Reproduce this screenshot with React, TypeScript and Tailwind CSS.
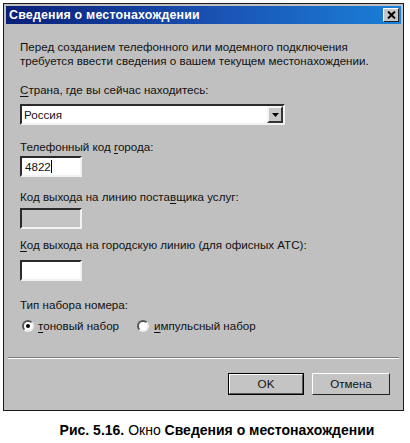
export default function App() {
  const sunken = 'border-2 border-t-[#2a2a2a] border-l-[#2a2a2a] border-b-[#f2f2f2] border-r-[#f2f2f2]';
  const raised = 'border-2 border-t-[#f4f4f4] border-l-[#f4f4f4] border-b-[#333] border-r-[#333]';
  const radio = 'border-2 border-t-[#555] border-l-[#555] border-b-[#eee] border-r-[#eee]';

  return (
    <div className="w-[410px] h-[443px] bg-white pt-[3px] pl-[3px] font-['Liberation_Sans',sans-serif] text-[11.6px] leading-[14px] text-[#111]">
      <div className="w-[401px] h-[408px] border border-[#1a1a1a] bg-[#c0c0c0] p-[2px] flex flex-col">
        {/* title bar */}
        <div className="h-[18px] flex items-center justify-between bg-gradient-to-r from-[#0a1f78] via-[#1a4fb0] to-[#1a80d8] pl-[3px] pr-[2px]">
          <span className="text-white font-bold text-[12.4px] tracking-[0.2px]">Сведения о местонахождении</span>
          <div className="w-[16px] h-[14px] bg-[#c8c8c8] flex items-center justify-center border border-t-white border-l-white border-b-[#222] border-r-[#222]">
            <svg width="9" height="8" viewBox="0 0 9 8">
              <path d="M1 0.5 L8 7.5 M8 0.5 L1 7.5" stroke="#000" strokeWidth="2" />
            </svg>
          </div>
        </div>

        <div className="pl-[14px] pr-[11px] flex flex-col">
          <p className="mt-[16px]">
            Перед созданием телефонного или модемного подключения
            <br />
            требуется ввести сведения о вашем текущем местонахождении.
          </p>

          <div className="mt-[15px]">
            <u className="underline-offset-2">С</u>трана, где вы сейчас находитесь:
          </div>
          <div className={`mt-[7px] w-[265px] h-[21px] bg-white flex items-center justify-between ${sunken}`}>
            <span className="pl-[2px]">Россия</span>
            <div className={`w-[16px] h-[17px] bg-[#c8c8c8] flex items-center justify-center ${raised}`}>
              <svg width="7" height="4" viewBox="0 0 7 4">
                <path d="M0 0 H7 L3.5 4 Z" fill="#000" />
              </svg>
            </div>
          </div>

          <div className="mt-[15px]">
            Телефонный код <u className="underline-offset-2">г</u>орода:
          </div>
          <div className={`mt-[2px] w-[62px] h-[21px] bg-white flex items-center pl-[3px] ${sunken}`}>
            <span>4822</span>
            <span className="w-px h-[13px] bg-black" />
          </div>

          <div className="mt-[13px]">
            Код выхода на линию поста<u className="underline-offset-2">в</u>щика услуг:
          </div>
          <div className={`mt-[4px] w-[62px] h-[21px] bg-[#c4c4c4] ${sunken}`} />

          <div className="mt-[9px]">
            <u className="underline-offset-2">К</u>од выхода на городскую линию (для офисных АТС):
          </div>
          <div className={`mt-[8px] w-[62px] h-[21px] bg-white ${sunken}`} />

          <div className="mt-[17px]">Тип набора номера:</div>
          <div className="mt-[7px] h-[14px] flex items-center">
            <span className={`ml-[2px] w-[12px] h-[12px] rounded-full bg-white flex items-center justify-center ${radio}`}>
              <span className="w-[4px] h-[4px] rounded-full bg-black" />
            </span>
            <span className="ml-[4px]">
              <u className="underline-offset-2">т</u>оновый набор
            </span>
            <span className={`ml-[18px] w-[12px] h-[12px] rounded-full bg-white ${radio}`} />
            <span className="ml-[5px]">
              <u className="underline-offset-2">и</u>мпульсный набор
            </span>
          </div>
        </div>

        <div className="mt-[24px] mx-[2px] h-[2px] border-t border-t-[#7a7a7a] border-b border-b-white" />

        <div className="mt-[14px] flex justify-end gap-[8px] pr-[11px]">
          <button className="w-[76px] h-[22px] bg-[#c4c4c4] border border-black flex items-center justify-center">
            <span className="w-full h-full flex items-center justify-center border border-t-white border-l-white border-b-[#555] border-r-[#555]">
              OK
            </span>
          </button>
          <button className="w-[78px] h-[22px] bg-[#c4c4c4] flex items-center justify-center border border-t-white border-l-white border-b-[#222] border-r-[#222]">
            Отмена
          </button>
        </div>
      </div>

      <div className="mt-[10px] ml-[12px] w-[404px] text-center text-[14px] leading-[18px] text-black">
        <b>Рис. 5.16.</b> Окно <b>Сведения о местонахождении</b>
      </div>
    </div>
  );
}
